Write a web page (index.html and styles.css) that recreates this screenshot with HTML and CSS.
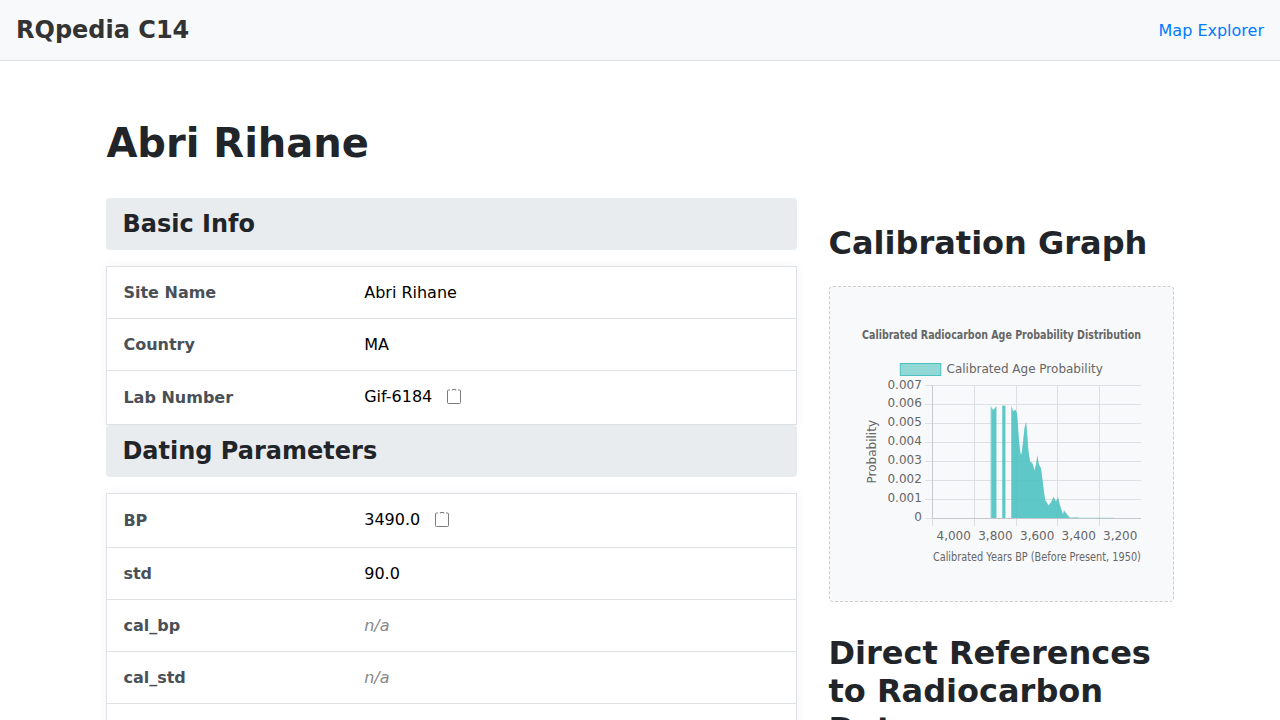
FILE: index.html
```html
<!DOCTYPE html>
<html lang="en">
<head>
<meta charset="utf-8">
<title>Abri Rihane - RQpedia C14</title>
<link rel="stylesheet" href="styles.css">
</head>
<body>
<header class="navbar"><a class="brand">RQpedia C14</a><a class="nav-link">Map Explorer</a></header>
<main class="page">
  <h1 class="title">Abri Rihane</h1>
  <div class="columns">
    <div class="details">
      <h2 class="section-title">Basic Info</h2>
      <div class="table">
        <div class="row"><div class="label">Site Name</div><div class="value">Abri Rihane</div></div>
        <div class="row"><div class="label">Country</div><div class="value">MA</div></div>
        <div class="row tall"><div class="label">Lab Number</div><div class="value">Gif-6184<svg class="copy" viewBox="0 0 16 16"><path d="M4 2H2.500A1 1 0 0 0 1.500 3V14.500A1 1 0 0 0 2.500 15.500h11a1 1 0 0 0 1-1V3A1 1 0 0 0 13.500 2H12M6.300 2.500V1.500h3.500v1"/></svg></div></div>
      </div>
      <h2 class="section-title">Dating Parameters</h2>
      <div class="table">
        <div class="row tall"><div class="label">BP</div><div class="value">3490.0<svg class="copy" viewBox="0 0 16 16"><path d="M4 2H2.500A1 1 0 0 0 1.500 3V14.500A1 1 0 0 0 2.500 15.500h11a1 1 0 0 0 1-1V3A1 1 0 0 0 13.500 2H12M6.300 2.500V1.500h3.500v1"/></svg></div></div>
        <div class="row"><div class="label">std</div><div class="value">90.0</div></div>
        <div class="row"><div class="label">cal_bp</div><div class="value empty">n/a</div></div>
        <div class="row"><div class="label">cal_std</div><div class="value empty">n/a</div></div>
        <div class="row"></div>
      </div>
    </div>
    <aside class="side">
      <h2 class="side-title">Calibration Graph</h2>
      <div class="chart-box">
        <svg class="chart" viewBox="846 303 311 282">
          <text class="chart-title" x="862" y="339" textLength="279" lengthAdjust="spacingAndGlyphs">Calibrated Radiocarbon Age Probability Distribution</text>
          <rect class="swatch" x="900.300" y="363.500" width="40.500" height="12"/>
          <text x="946.500" y="373">Calibrated Age Probability</text>
          <path class="grid" d="M925 385.500H1141M925 404.500H1141M925 423.500H1141M925 442.500H1141M925 461.500H1141M925 480.500H1141M925 499.500H1141M974.500 385V526M1016.500 385V526M1057.500 385V526M1099.500 385V526"/>
          <path class="grid" d="M925 518.500H932M932.500 519V526"/>
          <path class="axis" d="M932.500 385V518.500H1141"/>
          <path class="edge" d="M990.500 518V405.500L993 410L996.700 406V518ZM1002 518V405.500H1005.700V518ZM1011 518V405.500L1013 411L1015.500 409.500L1017 413L1019 440L1020.500 453L1021.500 454L1023 442L1024.500 428L1026 421.500L1027 428L1028.500 449L1030 461L1032.500 463L1034.500 470L1036 464L1037.500 454.500L1038.500 463L1041 468L1043 484L1045 499L1048.500 505L1051 502L1053.500 496.500L1056 501L1058 497L1060 505L1063 514L1064 510L1067 514L1070 517.500L1077 517L1080 517.700H1113.500V518.300Z"/>
          <path class="bars" d="M991.500 518V407L993 410.500L996 407V518ZM1002.700 518V406H1005V518ZM1011.700 518V406.500L1013 411.500L1015.500 410L1017 414L1019 442L1020.500 455H1021.500L1023 443L1024.500 429L1026 422.500L1028 450L1030 462L1032.500 464L1034.500 471L1036 465L1037.500 456L1038.500 464L1041 469L1043 485L1045 500L1048.500 506L1051 503L1053.500 497.500L1056 502L1058 498L1060 506L1063 515L1064 511L1067 515L1069.500 518Z"/>
          <g text-anchor="end">
            <text x="921.800" y="389">0.007</text><text x="921.800" y="407">0.006</text><text x="921.800" y="426">0.005</text><text x="921.800" y="445">0.004</text><text x="921.800" y="464">0.003</text><text x="921.800" y="483">0.002</text><text x="921.800" y="502">0.001</text><text x="921.800" y="521">0</text>
          </g>
          <g text-anchor="middle">
            <text x="953.700" y="540">4,000</text><text x="995.400" y="540">3,800</text><text x="1037.200" y="540">3,600</text><text x="1078.700" y="540">3,400</text><text x="1120.200" y="540">3,200</text>
            <text transform="translate(876 451.700) rotate(-90)">Probability</text>
          </g>
          <text x="932.900" y="561" textLength="208" lengthAdjust="spacingAndGlyphs">Calibrated Years BP (Before Present, 1950)</text>
        </svg>
      </div>
      <h2 class="side-title refs">Direct References to Radiocarbon Date</h2>
    </aside>
  </div>
</main>
</body>
</html>
```

FILE: styles.css
```css
* { box-sizing: border-box; }
html, body { height: 720px; overflow: hidden; }
body { margin: 0; background: #fff; color: #212529; font: 16px/20px "DejaVu Sans", sans-serif; }
.navbar { height: 61px; padding: 0 16px; display: flex; align-items: center; justify-content: space-between; background: #f8f9fa; border-bottom: 1px solid #dee2e6; }
.brand { font-size: 24px; line-height: 28px; font-weight: bold; color: #333; padding-bottom: 1px; }
.nav-link { color: #007bff; padding-top: 1px; }
.page { width: 1067.200px; margin: 0 auto; padding-top: 58px; }
.title { margin: 0; font-size: 40px; line-height: 48px; height: 79px; }
.columns { display: grid; grid-template-columns: 2fr 1fr; gap: 32px; }
.section-title { margin: 0 0 16px; height: 52px; padding: 12px 16px; font-size: 24px; line-height: 28px; background: #e9ecef; border-radius: 4px; }
.table { border: 1px solid #dee2e6; box-shadow: 0 0 10px rgba(0, 0, 0, .05); }
.row { display: flex; align-items: center; height: 52px; border-bottom: 1px solid #dee2e6; }
.row.tall { height: 54px; }
.row:last-child { border-bottom: 0; }
.row.tall:last-child { height: 53px; }
.label { width: 240.800px; padding-left: 16px; font-weight: bold; color: #495057; }
.tall .label { padding-top: 1px; }
.value { padding-left: 16px; color: #000; display: flex; align-items: center; }
.tall .value { padding-bottom: 2px; }
.empty { color: #888; font-style: italic; }
.copy { width: 16px; height: 16px; margin: 0 0 2px 14px; fill: none; stroke: #7c7c7c; stroke-width: 1; }
.side { padding-top: 26px; min-width: 0; }
.side-title { margin: 0; font-size: 32px; line-height: 38px; }
.chart-box { margin-top: 24px; height: 316px; padding: 16px; border: 1px dashed #ccc; border-radius: 4px; background: #f8f9fa; }
.chart { display: block; width: 311px; height: 282px; }
.chart text { font: 12px "DejaVu Sans", sans-serif; fill: #666; }
.chart .chart-title { font-weight: bold; }
.swatch { fill: #91d8d6; stroke: #4bc0c0; }
.grid { stroke: #dedfe2; fill: none; }
.axis { stroke: #c6c7ca; fill: none; }
.edge { fill: #4bc0c0; fill-opacity: .55; }
.bars { fill: #4bc0c0; fill-opacity: .75; }
.refs { margin-top: 32px; }
```
